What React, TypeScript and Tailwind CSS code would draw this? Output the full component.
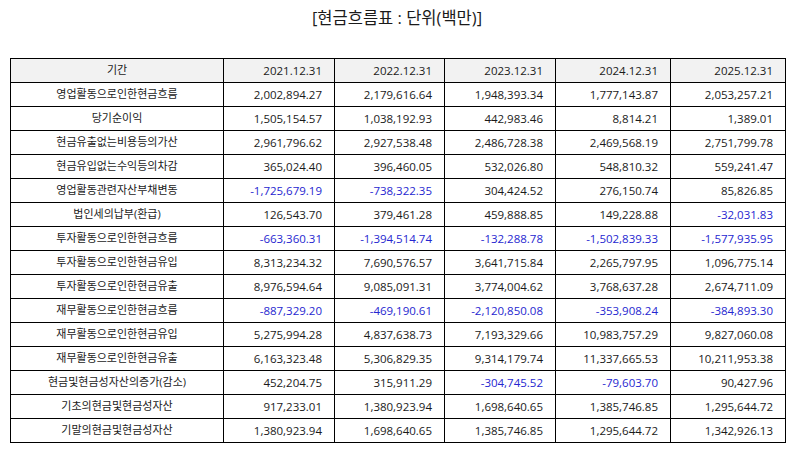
const years = ["2021.12.31", "2022.12.31", "2023.12.31", "2024.12.31", "2025.12.31"];

const rows: [string, string[]][] = [
  ["영업활동으로인한현금흐름", ["2,002,894.27", "2,179,616.64", "1,948,393.34", "1,777,143.87", "2,053,257.21"]],
  ["당기순이익", ["1,505,154.57", "1,038,192.93", "442,983.46", "8,814.21", "1,389.01"]],
  ["현금유출없는비용등의가산", ["2,961,796.62", "2,927,538.48", "2,486,728.38", "2,469,568.19", "2,751,799.78"]],
  ["현금유입없는수익등의차감", ["365,024.40", "396,460.05", "532,026.80", "548,810.32", "559,241.47"]],
  ["영업활동관련자산부채변동", ["-1,725,679.19", "-738,322.35", "304,424.52", "276,150.74", "85,826.85"]],
  ["법인세의납부(환급)", ["126,543.70", "379,461.28", "459,888.85", "149,228.88", "-32,031.83"]],
  ["투자활동으로인한현금흐름", ["-663,360.31", "-1,394,514.74", "-132,288.78", "-1,502,839.33", "-1,577,935.95"]],
  ["투자활동으로인한현금유입", ["8,313,234.32", "7,690,576.57", "3,641,715.84", "2,265,797.95", "1,096,775.14"]],
  ["투자활동으로인한현금유출", ["8,976,594.64", "9,085,091.31", "3,774,004.62", "3,768,637.28", "2,674,711.09"]],
  ["재무활동으로인한현금흐름", ["-887,329.20", "-469,190.61", "-2,120,850.08", "-353,908.24", "-384,893.30"]],
  ["재무활동으로인한현금유입", ["5,275,994.28", "4,837,638.73", "7,193,329.66", "10,983,757.29", "9,827,060.08"]],
  ["재무활동으로인한현금유출", ["6,163,323.48", "5,306,829.35", "9,314,179.74", "11,337,665.53", "10,211,953.38"]],
  ["현금및현금성자산의증가(감소)", ["452,204.75", "315,911.29", "-304,745.52", "-79,603.70", "90,427.96"]],
  ["기초의현금및현금성자산", ["917,233.01", "1,380,923.94", "1,698,640.65", "1,385,746.85", "1,295,644.72"]],
  ["기말의현금및현금성자산", ["1,380,923.94", "1,698,640.65", "1,385,746.85", "1,295,644.72", "1,342,926.13"]],
];

export default function App() {
  return (
    <div className="w-[794px] h-[452px] bg-white font-['Open_Sans','Noto_Sans_CJK_KR',sans-serif] text-[#1a1a1a]">
      <div className="h-[58px] pt-[6px] text-center text-[16.5px] leading-[24px]">[현금흐름표 : 단위(백만)]</div>
      <table className="ml-[10px] w-[775px] table-fixed border-collapse text-[11.5px]">
        <colgroup>
          <col className="w-[213px]" />
          <col className="w-[111px]" />
          <col className="w-[110px]" />
          <col className="w-[111px]" />
          <col className="w-[115px]" />
          <col className="w-[115px]" />
        </colgroup>
        <thead>
          <tr className="h-[24px] bg-[#f2f2f2]">
            <th className="border border-black font-normal text-center text-[11px]">기간</th>
            {years.map((y) => (
              <th key={y} className="border border-black font-normal text-right pr-[12px]">
                {y}
              </th>
            ))}
          </tr>
        </thead>
        <tbody>
          {rows.map(([label, vals]) => (
            <tr key={label} className="h-[24px]">
              <td className="border border-black text-center text-[11px]">{label}</td>
              {vals.map((v, i) => (
                <td
                  key={i}
                  className={
                    v.startsWith("-")
                      ? "border border-black text-right pr-[12px] text-[#2626d0]"
                      : "border border-black text-right pr-[12px]"
                  }
                >
                  {v}
                </td>
              ))}
            </tr>
          ))}
        </tbody>
      </table>
    </div>
  );
}
